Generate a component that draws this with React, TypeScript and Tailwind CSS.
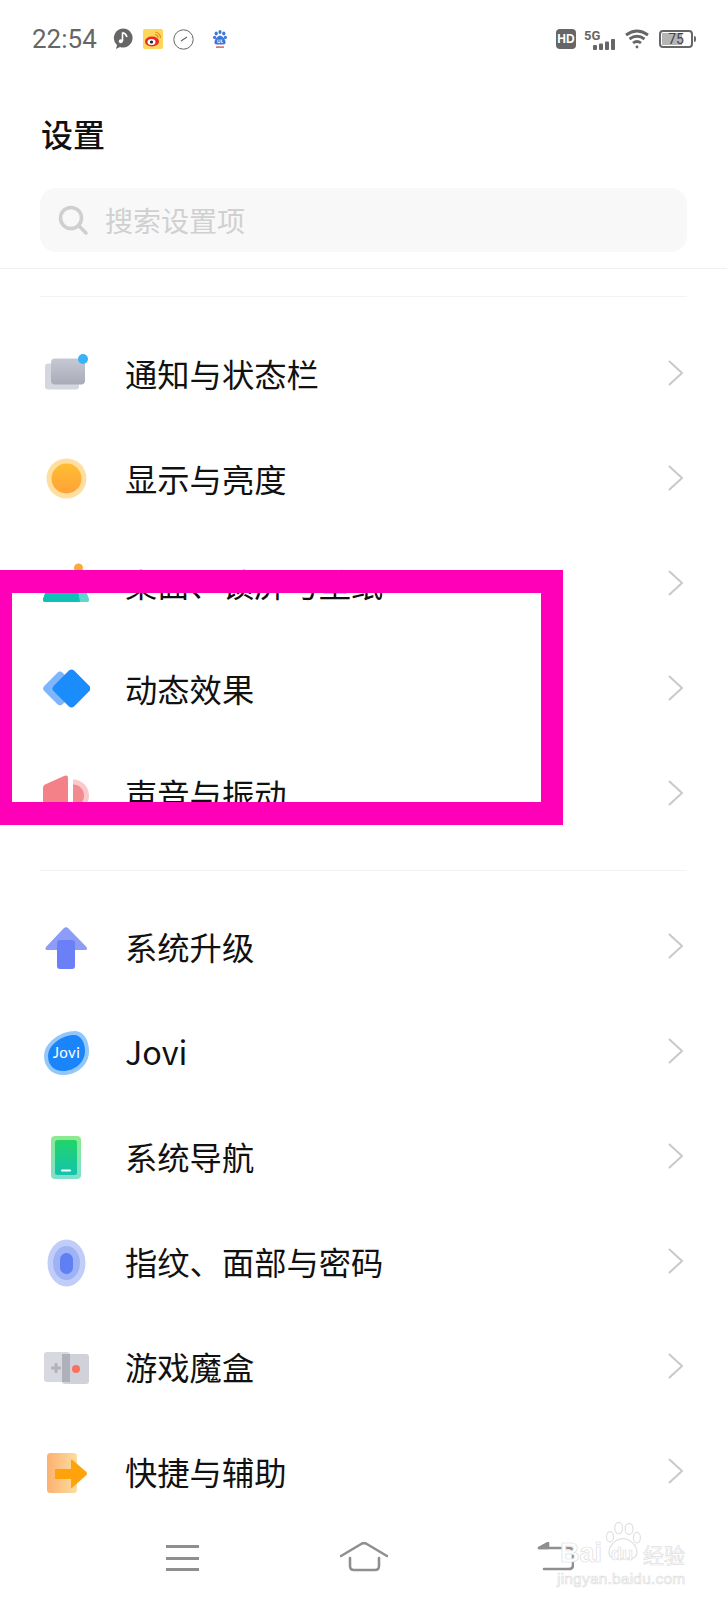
import type { ReactNode } from "react";

const cjk = "font-['Noto_Sans_CJK_SC','Noto_Sans',sans-serif]";

function IconBox({ children }: { children: ReactNode }) {
  return (
    <svg viewBox="0 0 48 48" className="h-12 w-12 shrink-0">
      {children}
    </svg>
  );
}

function NoticeIcon() {
  return (
    <IconBox>
      <defs>
        <linearGradient id="notice" x1="0" y1="0" x2="0" y2="1">
          <stop offset="0" stopColor="#c6c8d2" />
          <stop offset="1" stopColor="#a9abb8" />
        </linearGradient>
      </defs>
      <rect x="3" y="12.5" width="34" height="26" rx="3" fill="#d6d7de" />
      <rect x="9" y="7.5" width="34" height="26" rx="4" fill="url(#notice)" />
      <circle cx="41" cy="8" r="5" fill="#38b2f8" />
    </IconBox>
  );
}

function SunIcon() {
  return (
    <IconBox>
      <defs>
        <linearGradient id="sun" x1="0" y1="0" x2="0" y2="1">
          <stop offset="0" stopColor="#ffbd33" />
          <stop offset="1" stopColor="#ffa238" />
        </linearGradient>
      </defs>
      <circle cx="24.5" cy="22.5" r="20" fill="#fedfa0" />
      <circle cx="24.5" cy="22.5" r="15" fill="url(#sun)" />
    </IconBox>
  );
}

function DesktopIcon() {
  return (
    <IconBox>
      <circle cx="36.5" cy="7" r="4.5" fill="#fba93d" />
      <path d="M4 30 L44 30 L47 38 Q47.5 41 45 41 H3 Q0.5 41 1 38 Z" fill="#5fd6d0" />
      <path d="M4 30 L36 30 L38 41 H3 Q0.5 41 1 38 Z" fill="#0fc0b6" />
    </IconBox>
  );
}

function MotionIcon() {
  return (
    <IconBox>
      <rect x="5" y="9.5" width="26" height="26" rx="4" transform="rotate(45 18 22.5)" fill="#7db6fb" />
      <rect x="15" y="8" width="29" height="29" rx="4" transform="rotate(45 29.5 22.5)" fill="#1a8cfb" />
    </IconBox>
  );
}

function SoundIcon() {
  return (
    <IconBox>
      <path d="M31 8.5 A16 16 0 0 1 31 40.5 Z" fill="#f9c9cc" />
      <path d="M31 13.5 A11 11 0 0 1 31 35.5 Z" fill="#f28a90" />
      <path d="M1 17 Q1 14.5 3 13.5 L22 5 Q26 3.5 26 7 L26 42 Q26 45 22 44 L3 35 Q1 34 1 31 Z" fill="#f48088" />
    </IconBox>
  );
}

function UpgradeIcon() {
  return (
    <IconBox>
      <path d="M21.5 4.5 Q24 2 26.5 4.5 L44.5 23 Q46 25.5 43.5 26 L5 26 Q2.5 25.5 4 23 Z" fill="#8d9cf6" />
      <rect x="15" y="16" width="18" height="29" rx="3" fill="#6b80f6" />
    </IconBox>
  );
}

function JoviIcon() {
  return (
    <IconBox>
      <path d="M2 27 C2 14 18 2 33 2 C42 2 47 12 47 22 C47 36 35 46 21 46 C10 46 2 38 2 27 Z" fill="#93c6f9" />
      <path d="M6 27 C6 16 20 6 32 6 C39 6 43 14 43 22 C43 33 33 42 21 42 C12 42 6 36 6 27 Z" fill="#1a84fa" />
      <text x="24.5" y="29" textAnchor="middle" fontSize="15" fontWeight="400" letterSpacing="0.4" fontFamily="Lato, sans-serif" fill="#ffffff">
        Jovi
      </text>
    </IconBox>
  );
}

function NavIcon() {
  return (
    <IconBox>
      <defs>
        <linearGradient id="navOuter" x1="0" y1="0" x2="0" y2="1">
          <stop offset="0" stopColor="#8dea8f" />
          <stop offset="1" stopColor="#80e0cb" />
        </linearGradient>
        <linearGradient id="navInner" x1="0" y1="0" x2="0" y2="1">
          <stop offset="0" stopColor="#21d46a" />
          <stop offset="1" stopColor="#13c3ae" />
        </linearGradient>
      </defs>
      <rect x="9" y="2" width="30" height="43" rx="4" fill="url(#navOuter)" />
      <rect x="13" y="6" width="22" height="35" rx="2.5" fill="url(#navInner)" />
      <rect x="19" y="35.5" width="10" height="2" rx="1" fill="#ffffff" />
    </IconBox>
  );
}

function FingerprintIcon() {
  return (
    <IconBox>
      <ellipse cx="24.5" cy="24" rx="19" ry="23.5" fill="#c0cdf8" />
      <ellipse cx="24.5" cy="24" rx="13.5" ry="17" fill="#9fb2f6" />
      <rect x="18" y="14" width="13" height="21" rx="6.5" fill="#5f7ff5" />
    </IconBox>
  );
}

function GameIcon() {
  return (
    <IconBox>
      <rect x="2" y="8" width="26" height="30" rx="3" fill="#d8d9e0" />
      <rect x="20" y="10" width="27" height="30" rx="3" fill="#d0d1d9" />
      <rect x="20" y="10" width="8" height="28" fill="#aeb0bc" />
      <path d="M12.5 19 h3 v3.5 h3.5 v3 h-3.5 v3.5 h-3 v-3.5 h-3.5 v-3 h3.5 Z" fill="#b0b2bd" />
      <circle cx="34" cy="25" r="4" fill="#f8735f" />
    </IconBox>
  );
}

function ShortcutIcon() {
  return (
    <IconBox>
      <defs>
        <linearGradient id="shortcut" x1="0" y1="0" x2="1" y2="0">
          <stop offset="0" stopColor="#fbb070" />
          <stop offset="1" stopColor="#fddd9f" />
        </linearGradient>
      </defs>
      <rect x="5" y="4" width="30" height="40" rx="3.5" fill="url(#shortcut)" />
      <path d="M13 20 H29 V11.5 Q29 10 30.5 11 L44.5 23 Q45.5 24.5 44.5 26 L30.5 38.5 Q29 39.5 29 38 V30 H13 Z" fill="#ffa30d" />
    </IconBox>
  );
}

function Chevron() {
  return (
    <svg viewBox="0 0 16 26" className="mb-1 h-[26px] w-4" fill="none" stroke="#c9c9c9" strokeWidth="2" strokeLinecap="round" strokeLinejoin="round">
      <path d="M1.5 1.5 L14 13 L1.5 24.5" />
    </svg>
  );
}

function Row({ icon, label }: { icon: ReactNode; label: string }) {
  return (
    <div className="flex h-[105px] items-center pl-[42px] pr-[43px]">
      {icon}
      <span className="mb-1 ml-[35px] flex-1 text-[32.3px] leading-10 text-[#111]">{label}</span>
      <Chevron />
    </div>
  );
}

function StatusBar() {
  return (
    <div className="flex h-[78px] items-center pl-8 pr-[31px]">
      <span className="font-['Roboto',sans-serif] text-[26px] text-[#666]">22:54</span>
      <div className="ml-4 flex items-center gap-[10px]">
        <svg viewBox="0 0 20 22" className="h-[22px] w-5">
          <path d="M10 0.5 A9.5 9.5 0 1 1 7 19 L3 21 L4 17 A9.5 9.5 0 0 1 10 0.5 Z" fill="#666" />
          <path d="M9.5 4.5 V13 M9.5 4.5 Q13 5.5 14 9" stroke="#fff" strokeWidth="1.6" fill="none" />
          <circle cx="7.8" cy="13.2" r="2" fill="#fff" />
        </svg>
        <svg viewBox="0 0 20 20" className="h-5 w-5">
          <rect width="20" height="20" rx="2" fill="#fed65a" />
          <ellipse cx="9" cy="12.5" rx="7" ry="5" fill="#e8282c" />
          <ellipse cx="8.5" cy="13" rx="4" ry="3" fill="#fff" />
          <circle cx="8.5" cy="13" r="1.6" fill="#222" />
          <path d="M12 3 A6 6 0 0 1 17.5 9 M12 5.5 A3.5 3.5 0 0 1 15 9" stroke="#f08a1d" strokeWidth="1.2" fill="none" />
        </svg>
        <svg viewBox="0 0 21 21" className="h-[21px] w-[21px]" fill="none" stroke="#666">
          <circle cx="10.5" cy="10.5" r="9.7" strokeWidth="1" />
          <path d="M8 12 L14 8" strokeWidth="1.2" />
        </svg>
        <svg viewBox="0 0 14 18" className="ml-[9px] h-[18px] w-[14px]">
          <ellipse cx="3.2" cy="3.6" rx="1.6" ry="2" fill="#3b78d8" />
          <ellipse cx="7" cy="2" rx="1.6" ry="2" fill="#3b78d8" />
          <ellipse cx="10.8" cy="3.6" rx="1.6" ry="2" fill="#3b78d8" />
          <circle cx="1.6" cy="7.4" r="1.6" fill="#3b78d8" />
          <circle cx="12.4" cy="7.4" r="1.6" fill="#3b78d8" />
          <path d="M7 5.5 Q10 6 12 10 Q13.8 14.6 10 14.6 H4 Q0.2 14.6 2 10 Q4 6 7 5.5 Z" fill="#3b78d8" />
          <path d="M4.8 9.5 V12.6 H7 V9.5 M8.6 9.5 V12.6 H10" stroke="#fff" strokeWidth="0.8" fill="none" />
          <rect x="3" y="16.4" width="8" height="1.4" fill="#d9534f" />
        </svg>
      </div>
      <div className="ml-auto flex items-center">
        <div className="flex h-5 w-5 items-center justify-center rounded-[4px] bg-[#666] font-['Liberation_Sans',sans-serif] text-[12px] font-bold text-white">
          HD
        </div>
        <svg viewBox="0 -2 33 24" className="ml-2 h-6 w-[33px]">
          <text x="0" y="11" fontSize="13" fontWeight="700" fontFamily="Roboto, sans-serif" fill="#666">
            5G
          </text>
          <rect x="9" y="16" width="4" height="5" rx="1" fill="#666" />
          <rect x="15" y="14.5" width="4" height="6.5" rx="1" fill="#666" />
          <rect x="21" y="12.5" width="4" height="8.5" rx="1" fill="#666" />
          <rect x="27" y="10" width="4" height="11" rx="1" fill="#666" />
        </svg>
        <svg viewBox="0 0 24 20" className="ml-2 h-5 w-6" fill="none" stroke="#666" strokeWidth="2.8">
          <path d="M1 6 Q12 -2 23 6" />
          <path d="M4.5 10 Q12 4.5 19.5 10" />
          <path d="M8 14 Q12 11 16 14" />
          <circle cx="12" cy="18" r="1.4" fill="#666" stroke="none" />
        </svg>
        <div className="ml-[10px] flex items-center">
          <div className="relative flex h-[18px] w-[34px] items-center overflow-hidden rounded-[4px] border-2 border-[#666] p-[1px]">
            <div className="h-full w-[20px] bg-[#b5b5b5]" />
            <span className="absolute inset-0 flex items-center justify-center font-['Roboto',sans-serif] text-[14px] leading-none text-[#444]">
              75
            </span>
          </div>
          <div className="ml-[1px] h-[6px] w-[2px] rounded-r-sm bg-[#666]" />
        </div>
      </div>
    </div>
  );
}

function SearchBox() {
  return (
    <div className="mx-10 flex h-16 items-center rounded-2xl bg-[#f8f8f8] pl-[17px]">
      <svg viewBox="0 0 32 32" className="h-8 w-8" fill="none" stroke="#cfcfcf" strokeWidth="3.6" strokeLinecap="round">
        <circle cx="14" cy="14" r="10.5" />
        <path d="M22 22 L29 29" />
      </svg>
      <span className="ml-4 text-[28px] leading-9 text-[#d0d0d0]">搜索设置项</span>
    </div>
  );
}

function BottomNav() {
  return (
    <div className="flex h-[75px] items-start pt-[17px]">
      <div className="ml-[166px] mt-[3px] flex w-[33px] flex-col gap-[8.5px]">
        <div className="h-[3px] bg-[#8f8f8f]" />
        <div className="h-[3px] bg-[#8f8f8f]" />
        <div className="h-[3px] bg-[#8f8f8f]" />
      </div>
      <svg viewBox="0 0 48 30" className="ml-[141px] h-[30px] w-12" fill="none" stroke="#8f8f8f" strokeWidth="2.6" strokeLinecap="round" strokeLinejoin="round">
        <path d="M1 14 L22 1.5 Q24 0.8 26 1.5 L47 14" />
        <path d="M10 16 V24 Q10 28 14 28 H35 Q39 28 39 24 V16" />
      </svg>
      <svg viewBox="0 0 37 30" className="ml-[149px] h-[30px] w-[37px]" fill="none" stroke="#8f8f8f" strokeWidth="2.6" strokeLinecap="round" strokeLinejoin="round">
        <path d="M2 6 H32 Q36 6 36 10 V23 Q36 27 32 27 H7" />
        <path d="M2 6 L11 1 V6 Z" fill="#8f8f8f" />
      </svg>
    </div>
  );
}

function Watermark() {
  return (
    <div className="absolute left-[556px] top-[1520px] h-[66px] w-[136px] font-['Liberation_Sans',sans-serif] text-white [-webkit-text-stroke:0.7px_#e0e0e0]">
      <svg viewBox="0 0 46 46" className="absolute left-[47px] top-[2px] h-10 w-10" fill="#ffffff" stroke="#e0e0e0" strokeWidth="1.4">
        <ellipse cx="8" cy="17" rx="4" ry="6" />
        <ellipse cx="18" cy="7" rx="4.5" ry="6.5" />
        <ellipse cx="30" cy="8" rx="4.5" ry="6.5" />
        <ellipse cx="39" cy="18" rx="4" ry="6" />
        <path d="M23 19 C31 19 39 27 39 35 C39 42 32 43 23 42 C14 43 7 42 7 35 C7 27 15 19 23 19 Z" />
      </svg>
      <span className="absolute left-[4px] top-[19px] text-[27px] font-bold leading-7">Bai</span>
      <span className="absolute left-[55px] top-[24px] text-[18px] font-bold leading-5">du</span>
      <span className={`absolute left-[87px] top-[22px] text-[21px] leading-6 ${cjk}`}>经验</span>
      <span className="absolute left-[1px] top-[51px] text-[15.5px] leading-4 tracking-[0.2px]">jingyan.baidu.com</span>
    </div>
  );
}

export default function App() {
  return (
    <div className={`relative h-[1600px] w-[727px] overflow-hidden bg-white ${cjk}`}>
      <StatusBar />
      <div className="h-[110px] pl-[41px] pt-[35px] text-[32px] font-medium leading-10 text-[#111]">设置</div>
      <SearchBox />
      <div className="mt-4 h-px bg-[#f1f1f1]" />
      <div className="mx-10 mt-[27px] h-px bg-[#f3f3f3]" />

      <div className="mt-[25px]">
        <Row icon={<NoticeIcon />} label="通知与状态栏" />
        <Row icon={<SunIcon />} label="显示与亮度" />
        <Row icon={<DesktopIcon />} label="桌面、锁屏与壁纸" />
        <Row icon={<MotionIcon />} label="动态效果" />
        <Row icon={<SoundIcon />} label="声音与振动" />
      </div>

      <div className="mx-10 mt-[23px] h-px bg-[#f3f3f3]" />

      <div className="mt-[24px]">
        <Row icon={<UpgradeIcon />} label="系统升级" />
        <Row icon={<JoviIcon />} label="Jovi" />
        <Row icon={<NavIcon />} label="系统导航" />
        <Row icon={<FingerprintIcon />} label="指纹、面部与密码" />
        <Row icon={<GameIcon />} label="游戏魔盒" />
        <Row icon={<ShortcutIcon />} label="快捷与辅助" />
      </div>

      <BottomNav />
      <Watermark />

      {/* pink highlight drawn over the list */}
      <div className="absolute left-0 top-[570px] h-[255px] w-[563px] border-y-[23px] border-l-[12px] border-r-[22px] border-[#ff00b8]" />
    </div>
  );
}
